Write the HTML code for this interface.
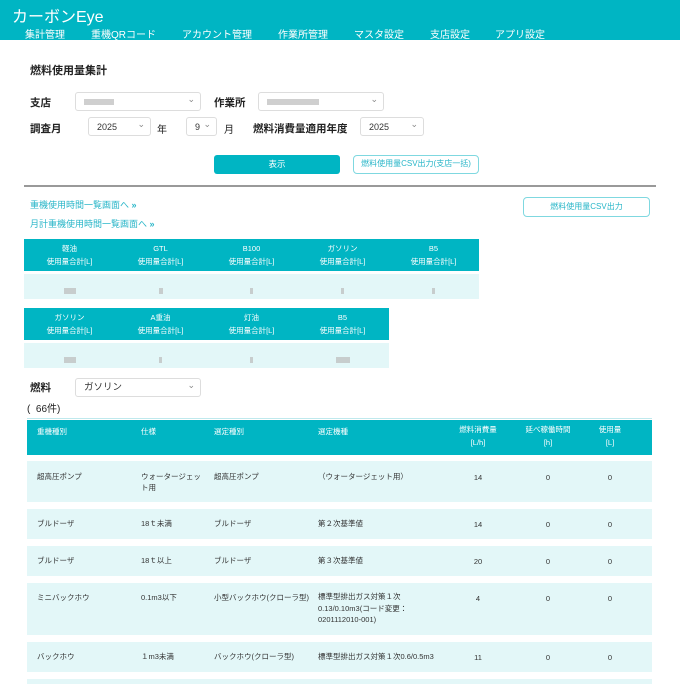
<!DOCTYPE html>
<html><head><meta charset="utf-8"><style>
*{margin:0;padding:0;box-sizing:border-box}
body{width:680px;height:680px;overflow:hidden;background:#fff;font-family:"Liberation Sans","Noto Sans CJK JP",sans-serif;color:#222;position:relative}
.a{position:absolute;white-space:nowrap}
.hd{position:absolute;left:0;top:0;width:680px;height:40px;background:#00b5c3}
.nav{font-size:10px;color:#fff;top:26px}
.sel{position:absolute;border:1px solid #ddd;border-radius:3px;background:#fff;font-size:9px;padding-left:8px;line-height:18px;color:#333}
.sel:after{content:"⌄";position:absolute;right:5px;top:-3px;font-size:9px;color:#888}
.lb{font-size:10.5px;font-weight:bold}
.th{background:#00b5c3;color:#fff;font-size:7.5px}
.td{background:#e3f7f8;font-size:7.5px;color:#333}
.c{position:absolute;text-align:center;line-height:13px}
.blur{display:inline-block;height:6px;background:#bbb;opacity:.7}
.lk{color:#28b6c8;font-size:9px}
</style></head><body>
<div class="hd"></div>
<div class="a" style="left:12px;top:3px;font-size:16px;color:#fff">カーボンEye</div>
<div class="a nav" style="left:25px">集計管理</div>
<div class="a nav" style="left:91px">重機QRコード</div>
<div class="a nav" style="left:182px">アカウント管理</div>
<div class="a nav" style="left:278px">作業所管理</div>
<div class="a nav" style="left:354px">マスタ設定</div>
<div class="a nav" style="left:430px">支店設定</div>
<div class="a nav" style="left:495px">アプリ設定</div>

<div class="a lb" style="left:30px;top:62px;font-size:11px">燃料使用量集計</div>
<div class="a lb" style="left:30px;top:95px">支店</div>
<div class="sel" style="left:75px;top:92px;width:126px;height:19px"><span class="blur" style="width:30px"></span></div>
<div class="a lb" style="left:214px;top:95px">作業所</div>
<div class="sel" style="left:258px;top:92px;width:126px;height:19px"><span class="blur" style="width:52px"></span></div>
<div class="a lb" style="left:30px;top:121px">調査月</div>
<div class="sel" style="left:88px;top:117px;width:63px;height:19px">2025</div>
<div class="a" style="left:157px;top:121px;font-size:10px">年</div>
<div class="sel" style="left:186px;top:117px;width:31px;height:19px">9</div>
<div class="a" style="left:224px;top:121px;font-size:10px">月</div>
<div class="a lb" style="left:253px;top:121px">燃料消費量適用年度</div>
<div class="sel" style="left:360px;top:117px;width:64px;height:19px">2025</div>
<div class="a" style="left:214px;top:155px;width:126px;height:19px;background:#00b5c3;border-radius:3px;color:#fff;font-size:8.5px;text-align:center;line-height:19px">表示</div>
<div class="a" style="left:353px;top:155px;width:126px;height:19px;border:1.5px solid #7fd8e0;border-radius:4px;color:#28b6c8;font-size:8px;text-align:center;line-height:16px">燃料使用量CSV出力(支店一括)</div>
<div class="a" style="left:24px;top:185px;width:632px;height:2px;background:#999"></div>
<div class="a lk" style="left:30px;top:198px">重機使用時間一覧画面へ <b>»</b></div>
<div class="a lk" style="left:30px;top:217px">月計重機使用時間一覧画面へ <b>»</b></div>
<div class="a" style="left:523px;top:197px;width:127px;height:20px;border:1.5px solid #7fd8e0;border-radius:4px;color:#28b6c8;font-size:8px;text-align:center;line-height:17px">燃料使用量CSV出力</div>

<div class="a th" style="left:24px;top:239px;width:455px;height:32px"></div>
<div class="a td" style="left:24px;top:274px;width:455px;height:25px"></div>
<div class="c th" style="left:24px;top:242px;width:91px">軽油<br>使用量合計[L]</div>
<div class="c th" style="left:115px;top:242px;width:91px">GTL<br>使用量合計[L]</div>
<div class="c th" style="left:206px;top:242px;width:91px">B100<br>使用量合計[L]</div>
<div class="c th" style="left:297px;top:242px;width:91px">ガソリン<br>使用量合計[L]</div>
<div class="c th" style="left:388px;top:242px;width:91px">B5<br>使用量合計[L]</div>
<div class="c" style="left:24px;top:283px;width:91px"><span class="blur" style="width:12px"></span></div>
<div class="c" style="left:115px;top:283px;width:91px"><span class="blur" style="width:4px"></span></div>
<div class="c" style="left:206px;top:283px;width:91px"><span class="blur" style="width:3px"></span></div>
<div class="c" style="left:297px;top:283px;width:91px"><span class="blur" style="width:3px"></span></div>
<div class="c" style="left:388px;top:283px;width:91px"><span class="blur" style="width:3px"></span></div>

<div class="a th" style="left:24px;top:308px;width:365px;height:32px"></div>
<div class="a td" style="left:24px;top:343px;width:365px;height:25px"></div>
<div class="c th" style="left:24px;top:311px;width:91px">ガソリン<br>使用量合計[L]</div>
<div class="c th" style="left:115px;top:311px;width:91px">A重油<br>使用量合計[L]</div>
<div class="c th" style="left:206px;top:311px;width:91px">灯油<br>使用量合計[L]</div>
<div class="c th" style="left:297px;top:311px;width:91px">B5<br>使用量合計[L]</div>
<div class="c" style="left:24px;top:352px;width:91px"><span class="blur" style="width:12px"></span></div>
<div class="c" style="left:115px;top:352px;width:91px"><span class="blur" style="width:3px"></span></div>
<div class="c" style="left:206px;top:352px;width:91px"><span class="blur" style="width:3px"></span></div>
<div class="c" style="left:297px;top:352px;width:91px"><span class="blur" style="width:14px"></span></div>

<div class="a lb" style="left:30px;top:380px">燃料</div>
<div class="sel" style="left:75px;top:378px;width:126px;height:19px;font-size:9.5px">ガソリン</div>
<div class="a" style="left:27px;top:400px;font-size:10px">(&nbsp; 66件)</div>
<div class="a" style="left:27px;top:418px;width:625px;height:1px;background:#bfe9ed"></div>

<div class="a th" style="left:27px;top:420px;width:625px;height:35px"></div>
<div class="a th" style="left:37px;top:426px">重機種別</div>
<div class="a th" style="left:141px;top:426px">仕様</div>
<div class="a th" style="left:214px;top:426px">選定種別</div>
<div class="a th" style="left:318px;top:426px">選定機種</div>
<div class="c th" style="left:448px;top:423px;width:60px">燃料消費量<br>[L/h]</div>
<div class="c th" style="left:518px;top:423px;width:60px">延べ稼働時間<br>[h]</div>
<div class="c th" style="left:580px;top:423px;width:60px">使用量<br>[L]</div>

<div class="a td" style="left:27px;top:461px;width:625px;height:41px"></div>
<div class="a td" style="left:27px;top:509px;width:625px;height:30px"></div>
<div class="a td" style="left:27px;top:546px;width:625px;height:30px"></div>
<div class="a td" style="left:27px;top:583px;width:625px;height:52px"></div>
<div class="a td" style="left:27px;top:642px;width:625px;height:30px"></div>
<div class="a td" style="left:27px;top:679px;width:625px;height:5px"></div>

<div style="position:absolute;left:0;top:0;font-size:7.5px;color:#333;line-height:11px">
<div class="a" style="left:37px;top:471px">超高圧ポンプ</div>
<div class="a" style="left:141px;top:471px">ウォータージェッ<br>ト用</div>
<div class="a" style="left:214px;top:471px">超高圧ポンプ</div>
<div class="a" style="left:318px;top:471px">（ウォータージェット用）</div>
<div class="c" style="left:448px;top:471px;width:60px">14</div>
<div class="c" style="left:518px;top:471px;width:60px">0</div>
<div class="c" style="left:580px;top:471px;width:60px">0</div>

<div class="a" style="left:37px;top:518px">ブルドーザ</div>
<div class="a" style="left:141px;top:518px">18ｔ未満</div>
<div class="a" style="left:214px;top:518px">ブルドーザ</div>
<div class="a" style="left:318px;top:518px">第２次基準値</div>
<div class="c" style="left:448px;top:518px;width:60px">14</div>
<div class="c" style="left:518px;top:518px;width:60px">0</div>
<div class="c" style="left:580px;top:518px;width:60px">0</div>

<div class="a" style="left:37px;top:555px">ブルドーザ</div>
<div class="a" style="left:141px;top:555px">18ｔ以上</div>
<div class="a" style="left:214px;top:555px">ブルドーザ</div>
<div class="a" style="left:318px;top:555px">第３次基準値</div>
<div class="c" style="left:448px;top:555px;width:60px">20</div>
<div class="c" style="left:518px;top:555px;width:60px">0</div>
<div class="c" style="left:580px;top:555px;width:60px">0</div>

<div class="a" style="left:37px;top:592px">ミニバックホウ</div>
<div class="a" style="left:141px;top:592px">0.1m3以下</div>
<div class="a" style="left:214px;top:592px">小型バックホウ(クローラ型)</div>
<div class="a" style="left:318px;top:591px;line-height:11.5px">標準型排出ガス対策１次<br>0.13/0.10m3(コード変更：<br>0201112010-001)</div>
<div class="c" style="left:448px;top:592px;width:60px">4</div>
<div class="c" style="left:518px;top:592px;width:60px">0</div>
<div class="c" style="left:580px;top:592px;width:60px">0</div>

<div class="a" style="left:37px;top:651px">バックホウ</div>
<div class="a" style="left:141px;top:651px">１m3未満</div>
<div class="a" style="left:214px;top:651px">バックホウ(クローラ型)</div>
<div class="a" style="left:318px;top:651px">標準型排出ガス対策１次0.6/0.5m3</div>
<div class="c" style="left:448px;top:651px;width:60px">11</div>
<div class="c" style="left:518px;top:651px;width:60px">0</div>
<div class="c" style="left:580px;top:651px;width:60px">0</div>
</div>
</body></html>
